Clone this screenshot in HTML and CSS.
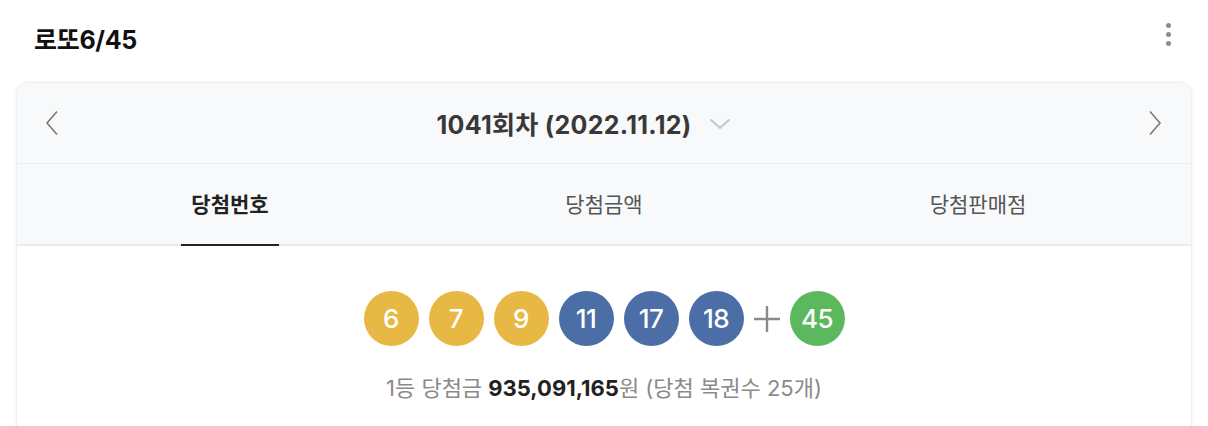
FILE: index.html
```html
<!DOCTYPE html>
<html lang="ko">
<head>
<meta charset="utf-8">
<title>로또6/45</title>
<link rel="stylesheet" href="styles.css">
</head>
<body>
<div class="page">
  <div class="top">
    <h1 class="title">로또6/45</h1>
    <button class="more" aria-label="더보기"><span></span><span></span><span></span></button>
  </div>
  <div class="card">
    <div class="round-bar">
      <button class="nav" aria-label="이전">
        <svg width="14" height="26" viewBox="0 0 14 26"><path d="M12 1.5 L2 13 L12 24.5" fill="none" stroke="#7a7a7a" stroke-width="1.6"/></svg>
      </button>
      <div class="round">
        <span class="round-text">1041회차 (2022.11.12)</span>
        <svg class="caret" width="22" height="12" viewBox="0 0 22 12"><path d="M1.5 1.5 L11 10 L20.5 1.5" fill="none" stroke="#c2c4c7" stroke-width="2"/></svg>
      </div>
      <button class="nav" aria-label="다음">
        <svg width="14" height="26" viewBox="0 0 14 26"><path d="M2 1.5 L12 13 L2 24.5" fill="none" stroke="#7a7a7a" stroke-width="1.6"/></svg>
      </button>
    </div>
    <div class="tabs">
      <div class="tab active"><span>당첨번호</span></div>
      <div class="tab"><span>당첨금액</span></div>
      <div class="tab"><span>당첨판매점</span></div>
    </div>
    <div class="result">
      <div class="balls">
        <span class="ball yellow">6</span>
        <span class="ball yellow">7</span>
        <span class="ball yellow">9</span>
        <span class="ball blue">11</span>
        <span class="ball blue">17</span>
        <span class="ball blue">18</span>
        <span class="plus"><svg width="26" height="26" viewBox="0 0 26 26"><path d="M13 0 V26 M0 13 H26" stroke="#8a8a8a" stroke-width="2.4"/></svg></span>
        <span class="ball green">45</span>
      </div>
      <p class="prize">1등 당첨금 <strong>935,091,165</strong>원 (당첨 복권수 25개)</p>
    </div>
  </div>
</div>
</body>
</html>
```

FILE: styles.css
```css
* { box-sizing: border-box; }
html, body { margin: 0; padding: 0; background: #fff; }
body {
  font-family: Inter, "Noto Sans CJK KR", sans-serif;
  color: #222;
}
.page { padding: 0 16px; }
.top {
  display: flex;
  align-items: center;
  justify-content: space-between;
  height: 82px;
  padding: 0 14px 2px 18px;
}
.title {
  margin: 0;
  font-size: 25px;
  font-weight: 700;
  color: #111;
  letter-spacing: -0.3px;
  padding-bottom: 5px;
}
.more {
  border: 0;
  background: none;
  padding: 0;
  width: 20px;
  height: 26px;
  display: flex;
  flex-direction: column;
  align-items: center;
  justify-content: center;
  gap: 4px;
  margin-bottom: 11px;
}
.more span {
  width: 5px;
  height: 5px;
  border-radius: 50%;
  background: #8c8c8c;
}
.card {
  border: 1px solid #eceef0;
  border-radius: 12px;
  overflow: hidden;
  box-shadow: 0 1px 4px rgba(0, 0, 0, 0.06);
  background: #fff;
  height: 360px;
}
.round-bar {
  display: flex;
  align-items: center;
  justify-content: space-between;
  height: 81px;
  padding: 0 29px 0 28px;
  background: #f8f9fa;
  border-bottom: 1px solid #eceef0;
}
.nav {
  border: 0;
  background: none;
  padding: 0;
  display: flex;
}
.round {
  display: flex;
  align-items: center;
  gap: 17px;
  margin-right: 40px;
}
.round-text {
  font-size: 25px;
  font-weight: 700;
  color: #383838;
  letter-spacing: 0.3px;
}
.caret { margin-top: 2px; }
.tabs {
  display: grid;
  grid-template-columns: repeat(3, 1fr);
  height: 82px;
  padding: 0 26px;
  background: #f8f9fa;
  border-bottom: 2px solid #e9ecef;
}
.tab {
  display: flex;
  justify-content: center;
}
.tab span {
  display: flex;
  align-items: center;
  padding: 0 10px 2px;
  font-size: 21px;
  color: #555;
  margin-bottom: -2px;
  border-bottom: 2px solid transparent;
}
.tab.active span {
  font-weight: 700;
  color: #222;
  border-bottom-color: #222;
}
.result {
  display: flex;
  flex-direction: column;
  align-items: center;
  padding-top: 45px;
}
.balls {
  display: flex;
  align-items: center;
  gap: 10px;
}
.ball {
  width: 55px;
  height: 55px;
  border-radius: 50%;
  display: flex;
  align-items: center;
  justify-content: center;
  color: #fff;
  font-size: 26px;
  font-weight: 500;
  letter-spacing: -0.5px;
}
.yellow { background: #e8b845; }
.blue { background: #4a6ea5; }
.green { background: #5cb85c; }
.plus {
  display: flex;
  width: 26px;
}
.prize {
  margin: 24px 0 0;
  font-size: 22px;
  color: #8a8a8a;
  letter-spacing: 0;
}
.prize strong {
  color: #222;
  font-weight: 700;
}
```
